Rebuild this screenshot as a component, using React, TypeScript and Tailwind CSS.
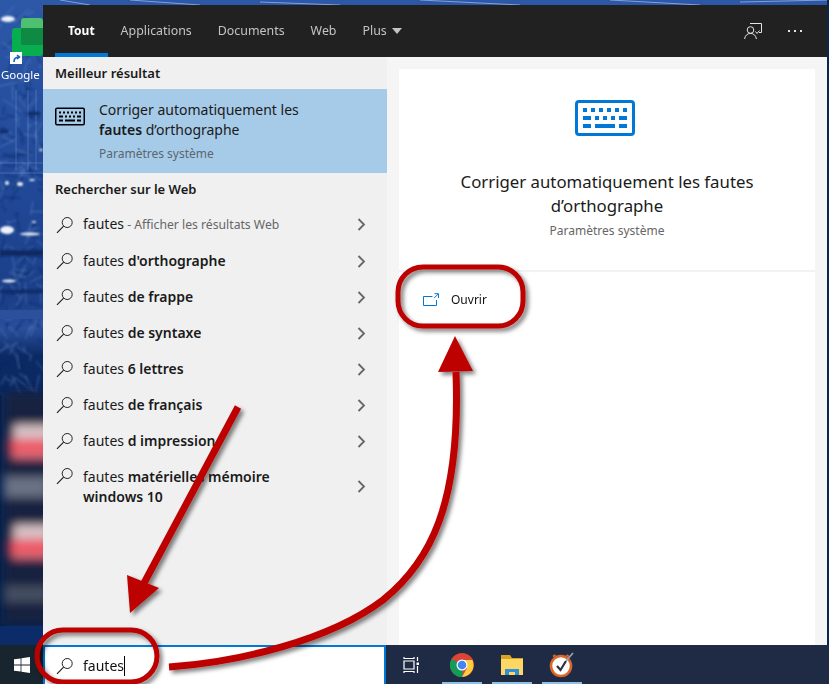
const font = "font-['Noto_Sans','Open_Sans',sans-serif]";

const Search = ({ className = "" }: { className?: string }) => (
  <svg className={className} width="18" height="18" viewBox="0 0 18 18" fill="none" stroke="#222" strokeWidth="1">
    <circle cx="11.200" cy="6.500" r="5" />
    <path d="M7.600 10.200 1 16.800" strokeWidth="1.200" />
  </svg>
);

const Chevron = () => (
  <svg width="9" height="13" viewBox="0 0 9 13" fill="none" stroke="#666" strokeWidth="1.800">
    <path d="M1.500 1l5.500 5.500-5.500 5.500" />
  </svg>
);

// same key layout at both sizes, the viewBox does the scaling
const Keyboard = ({ color, width, height, frame }: { color: string; width: number; height: number; frame: string }) => (
  <svg width={width} height={height} viewBox="0 0 60 36">
    <rect x="1.500" y="1.500" width="57" height="33" rx="2.500" fill="none" stroke={color} strokeWidth={frame} />
    <g fill={color}>
      {[8, 16, 24, 32, 40, 48].map((x) => (
        <rect key={x} x={x} y="8" width="4" height="4" />
      ))}
      <rect x="8" y="16" width="8" height="4" />
      {[20, 28, 36].map((x) => (
        <rect key={x} x={x} y="16" width="4" height="4" />
      ))}
      <rect x="44" y="16" width="8" height="4" />
      <rect x="8" y="24" width="8" height="4" />
      <rect x="20" y="24" width="20" height="4" />
      <rect x="44" y="24" width="8" height="4" />
    </g>
  </svg>
);

// fixed pseudo random strokes for the busy wallpaper texture
const noise = (n: number) => {
  const v = Math.sin(n * 127.1) * 43758.5453;
  return v - Math.floor(v);
};
const strokes = Array.from({ length: 220 }, (_, i) => {
  const x = noise(i) * 43;
  const y = 5 + noise(i + 200) * 385;
  const a = noise(i + 400) * Math.PI;
  const l = 4 + noise(i + 600) * 18;
  return {
    d: `M${x.toFixed(1)} ${y.toFixed(1)}l${(Math.cos(a) * l).toFixed(1)} ${(Math.sin(a) * l).toFixed(1)}`,
    light: i % 2 === 0,
  };
});

const Wallpaper = () => (
  <svg className="absolute inset-0" width="829" height="684" viewBox="0 0 829 684">
    <defs>
      <filter id="soft" x="-30%" y="-30%" width="160%" height="160%"><feGaussianBlur stdDeviation="5" /></filter>
      <filter id="tiny"><feGaussianBlur stdDeviation="0.800" /></filter>
      <linearGradient id="wall" x1="0" y1="0" x2="0" y2="1">
        <stop offset="0" stopColor="#2d58a8" />
        <stop offset="0.3" stopColor="#1f4795" />
        <stop offset="0.44" stopColor="#1b3f88" />
        <stop offset="0.48" stopColor="#2a4f9c" />
        <stop offset="0.52" stopColor="#0b2a64" />
        <stop offset="1" stopColor="#07204a" />
      </linearGradient>
    </defs>
    <rect width="829" height="684" fill="url(#wall)" />
    <g strokeWidth="1" filter="url(#tiny)">
      {strokes.map((s) => (
        <path key={s.d} d={s.d} stroke={s.light ? "#6f93d4" : "#0a2560"} opacity={s.light ? 0.5 : 0.7} />
      ))}
    </g>
    <g stroke="#a9c1ea" strokeWidth="1" opacity="0.7">
      <path d="M0 163H43M0 173H43M16 90V170M28 90V170M36 90V170" opacity="0.4" />
      <path d="M60 0 90 5M130 0 200 5M260 2 340 5M420 0 520 5M610 0 700 5M740 2 829 0" />
    </g>
    <path d="M827 0h2v684h-2z" fill="#0b2450" />
    <g fill="#eef3fb" filter="url(#tiny)">
      <ellipse cx="8" cy="19" rx="7" ry="3" />
      <ellipse cx="7" cy="183" rx="2" ry="2" />
      <ellipse cx="20" cy="184" rx="3" ry="2" />
      <ellipse cx="32" cy="180" rx="3" ry="1" />
      <ellipse cx="41" cy="150" rx="2" ry="1" />
      <ellipse cx="7" cy="230" rx="7" ry="4" />
      <ellipse cx="30" cy="234" rx="10" ry="1.500" />
      <ellipse cx="9" cy="281" rx="7" ry="1.500" />
      <ellipse cx="34" cy="222" rx="2" ry="1" />
    </g>
    <g fill="#0b2a64" filter="url(#tiny)">
      <rect x="0" y="130" width="8" height="3" />
      <rect x="28" y="112" width="12" height="3" />
      <rect x="0" y="250" width="43" height="6" />
      <rect x="0" y="290" width="43" height="3" />
    </g>
    <rect x="0" y="310" width="43" height="9" fill="#2d509d" />
    <rect x="0" y="395" width="2" height="250" fill="#07204a" />
    <g filter="url(#soft)">
      <rect x="4" y="392" width="50" height="232" fill="#13233f" />
      <rect x="14" y="425" width="36" height="16" fill="#d9c5c8" />
      <rect x="12" y="438" width="38" height="20" fill="#e2707e" />
      <rect x="10" y="445" width="40" height="4" fill="#ff1828" />
      <rect x="4" y="477" width="44" height="20" fill="#6b7285" />
      <rect x="14" y="525" width="36" height="16" fill="#d9c5c8" />
      <rect x="12" y="538" width="38" height="20" fill="#e2707e" />
      <rect x="10" y="546" width="40" height="4" fill="#ff1828" />
      <rect x="4" y="586" width="44" height="16" fill="#454d60" />
    </g>
    <rect x="0" y="626" width="43" height="19" fill="#0b2c69" />
  </svg>
);

const DesktopIcon = () => (
  <div className="absolute left-0 top-[17px] w-[43px] h-[70px]">
    <div className="absolute left-[21px] top-[1px] w-[22px] h-[30px] rounded-[3px] bg-[#4fc06f]" />
    <div className="absolute left-[12px] top-[11px] w-[31px] h-[28px] rounded-[3px] bg-[#08ad4f]" />
    <div className="absolute left-[21px] top-[11px] w-[22px] h-[17px] bg-[#0e8a45]" />
    <div className="absolute left-[10px] top-[35px] w-[12px] h-[12px] bg-white flex items-center justify-center">
      <svg width="9" height="9" viewBox="0 0 9 9" fill="none" stroke="#1f5fbf" strokeWidth="1.600">
        <path d="M2 8C2 5 3.500 3 7 3M5 1l2.500 2L5 5" />
      </svg>
    </div>
    <p className="absolute left-[1px] top-[50px] text-[11.500px] leading-[16px] text-white whitespace-nowrap">Google</p>
  </div>
);

const Suggestion = ({ text, bold, note, second, tall }: { text: string; bold?: string; note?: string; second?: string; tall?: boolean }) => (
  <div className={`flex pl-[13px] pr-[21px] ${second ? "h-[46px] pt-[8px]" : tall ? "h-[37px] items-center" : "h-[36px] items-center"}`}>
    <Search className="shrink-0" />
    <div className="flex-1 pl-[9px] text-[14px] leading-[20px] text-[#1a1a1a]">
      {text}
      {bold && <span className="font-semibold"> {bold}</span>}
      {note && <span className="text-[12.200px] text-[#666]"> - {note}</span>}
      {second && (
        <>
          <br />
          <span className="font-semibold">{second}</span>
        </>
      )}
    </div>
    <div className="flex items-center">
      <Chevron />
    </div>
  </div>
);

const Tab = ({ label, active }: { label: string; active?: boolean }) => (
  <div className={`relative flex items-center h-full px-[13px] ${active ? "text-[12px] font-bold text-white" : "text-[12.400px] text-[#c4c4c4]"}`}>
    {label}
    {active && <div className="absolute left-0 right-0 bottom-0 h-[4px] bg-[#0078d7]" />}
  </div>
);

const Chrome = () => (
  <svg width="24" height="24" viewBox="0 0 24 24">
    <circle cx="12" cy="12" r="12" fill="#db4437" />
    <path d="M12 12 1.600 18A12 12 0 0 0 12 24h1z" fill="#0f9d58" />
    <path d="M1.600 18A12 12 0 0 1 1.700 6L12 12z" fill="#0f9d58" />
    <path d="M12 7h10.400A12 12 0 0 1 12 24l5-9z" fill="#ffcd40" />
    <circle cx="12" cy="12" r="5.500" fill="#fff" />
    <circle cx="12" cy="12" r="4.300" fill="#4285f4" />
  </svg>
);

const Folder = () => (
  <svg width="22" height="20" viewBox="0 0 22 20">
    <path d="M0 0h9l2 3h11v17H0z" fill="#d9a520" />
    <rect x="0" y="4" width="22" height="16" fill="#fcd763" />
    <path d="M4 20v-6h14v6h-4v-3H8v3z" fill="#2f8fd8" />
  </svg>
);

const Clock = () => (
  <svg width="26" height="26" viewBox="0 0 26 26" fill="none">
    <circle cx="12" cy="14" r="10" fill="#fff" stroke="#d9682a" strokeWidth="2.600" />
    <path d="M8 14l3.500 4L17 9" stroke="#2c3340" strokeWidth="2.200" />
    <path d="M17 9 24 1" stroke="#9aa3b2" strokeWidth="1.600" />
    <path d="M4 4.500 6.500 3M20 4.500 17.500 3" stroke="#d9682a" strokeWidth="2" />
  </svg>
);

const Annotations = () => (
  <svg className="absolute inset-0 pointer-events-none" width="829" height="684" viewBox="0 0 829 684" fill="none">
    <defs>
      <filter id="shade" x="-20%" y="-20%" width="140%" height="140%">
        <feDropShadow dx="3" dy="3" stdDeviation="2" floodColor="#000" floodOpacity="0.5" />
      </filter>
    </defs>
    <g filter="url(#shade)">
      <rect x="398" y="267" width="125" height="59" rx="25" stroke="#bd0000" strokeWidth="5" />
      <rect x="37" y="630" width="120" height="52" rx="26" stroke="#bd0000" strokeWidth="5" />
      <path d="M238 407 143 585" stroke="#bd0000" strokeWidth="7" />
      <path d="M127 575 159 588 130 613z" fill="#bd0000" />
      <path d="M169 667C240 662 330 640 383 600 430 562 461 505 456 372" stroke="#bd0000" strokeWidth="7" />
      <path d="M455 336 438 372 473 371z" fill="#bd0000" />
    </g>
  </svg>
);

export default function App() {
  return (
    <div className={`${font} relative w-[829px] h-[684px] overflow-hidden bg-[#0b2450]`}>
      <Wallpaper />
      <DesktopIcon />
      <div className="relative flex flex-col h-full">
        <div className="flex-1 min-h-0 pl-[43px] pt-[5px] pr-[2px] flex">
          <div className="flex-1 flex flex-col">
            <div className="h-[52px] bg-[#212121] flex items-center pl-[12px] pr-[22px]">
              <Tab label="Tout" active />
              <Tab label="Applications" />
              <Tab label="Documents" />
              <Tab label="Web" />
              <Tab label="Plus" />
              <div className="-ml-[8px] w-0 h-0 border-x-[5px] border-x-transparent border-t-[6px] border-t-[#c4c4c4]" />
              <div className="ml-auto flex items-center gap-[26px]">
                <svg width="18" height="18" viewBox="0 0 18 18" fill="none" stroke="#e4e4e4" strokeWidth="1">
                  <circle cx="6.500" cy="8" r="3.300" />
                  <path d="M.6 17c.4-3.500 2.800-5.600 5.900-5.600s5.500 2.100 5.900 5.600M6 1.500h11.500v9H15M11.500 9.500l1.500 2 2.500-3" />
                </svg>
                <div className="flex gap-[4px] pr-[3px]">
                  <div className="w-[2px] h-[2px] bg-[#e4e4e4]" />
                  <div className="w-[2px] h-[2px] bg-[#e4e4e4]" />
                  <div className="w-[2px] h-[2px] bg-[#e4e4e4]" />
                </div>
              </div>
            </div>
            <div className="flex-1 min-h-0 flex">
              <div className="w-[344px] bg-[#f0f0f0]">
                <div className="h-[32px] pt-[1px] flex items-center px-[12px] text-[13px] font-semibold text-[#1a1a1a]">Meilleur résultat</div>
                <div className="h-[84px] bg-[#a6cbe8] flex">
                  <div className="w-[56px] pl-[12px] pt-[18px]">
                    <Keyboard color="#000" width={30} height={19} frame="3" />
                  </div>
                  <div className="pt-[11px] text-[14px] leading-[20px] text-[#1a1a1a]">
                    <p>Corriger automatiquement les</p>
                    <p><span className="font-semibold">fautes</span> d’orthographe</p>
                    <p className="mt-[4px] text-[12px] leading-[20px] text-[#5a6670]">Paramètres système</p>
                  </div>
                </div>
                <div className="h-[33px] flex items-center px-[12px] text-[13px] font-semibold text-[#1a1a1a]">Rechercher sur le Web</div>
                <Suggestion text="fautes" note="Afficher les résultats Web" tall />
                <Suggestion text="fautes" bold="d'orthographe" />
                <Suggestion text="fautes" bold="de frappe" />
                <Suggestion text="fautes" bold="de syntaxe" />
                <Suggestion text="fautes" bold="6 lettres" />
                <Suggestion text="fautes" bold="de français" />
                <Suggestion text="fautes" bold="d impression" />
                <Suggestion text="fautes" bold="matérielles mémoire" second="windows 10" />
              </div>
              <div className="flex-1 bg-[#f5f5f5] pl-[12px] pr-[12px] pt-[12px]">
                <div className="h-full bg-white flex flex-col">
                  <div className="h-[203px] border-b-2 border-[#f2f2f2] flex flex-col items-center pt-[31px]">
                    <div className="-ml-[4px]">
                      <Keyboard color="#0078d7" width={60} height={36} frame="3" />
                    </div>
                    <p className="mt-[34px] w-[340px] text-center text-[16.800px] leading-[24px] text-[#1a1a1a]">
                      Corriger automatiquement les fautes d’orthographe
                    </p>
                    <p className="mt-[3px] text-[12px] leading-[20px] text-[#666]">Paramètres système</p>
                  </div>
                  <div className="flex items-center h-[55px] pl-[24px]">
                    <svg width="16" height="13" viewBox="0 0 16 13" fill="none" stroke="#0078d7" strokeWidth="1">
                      <path d="M13.500 7v5.500H.5v-9h9M11.500 .7h4V5M15.200 1l-4 4" />
                    </svg>
                    <span className="ml-[12px] text-[12px] text-[#111]">Ouvrir</span>
                  </div>
                </div>
              </div>
            </div>
          </div>
        </div>
        <div className="h-[39px] bg-[#1f2b45] flex">
          <div className="w-[43px] bg-[#18242e] flex items-center justify-center">
            <svg width="16" height="16" viewBox="0 0 16 16" fill="#fff">
              <path d="M0 2.300 6.600 1.400V7.600H0zM7.400 1.300 16 0V7.600H7.400zM0 8.400H6.600V14.600L0 13.700zM7.400 8.400H16V16L7.400 14.700z" />
            </svg>
          </div>
          <div className="w-[343px] bg-white border-2 border-b-0 border-[#0078d7] flex items-center pl-[11px]">
            <Search />
            <span className="ml-[9px] text-[14px] text-[#111]">fautes</span>
            <div className="w-px h-[20px] bg-black" />
          </div>
          <div className="flex-1 flex items-center">
            <div className="w-[51px] flex justify-center">
              <svg className="ml-[-2px]" width="16" height="16" viewBox="0 0 16 16" fill="none" stroke="#fff" strokeWidth="1.200">
                <path d="M1 0v1.500h10V0M1 16v-1.500h10V16M1 4h10v8H1zM14.500 0v4M14.500 9v7" />
                <rect x="13.500" y="5.500" width="2.500" height="2.500" fill="#fff" stroke="none" />
              </svg>
            </div>
            <div className="relative w-[50px] h-full flex items-center justify-center">
              <Chrome />
              <div className="absolute left-[5px] right-[5px] bottom-0 h-[2px] bg-[#8fc1e8]" />
            </div>
            <div className="relative w-[50px] h-full flex items-center justify-center">
              <Folder />
              <div className="absolute left-[5px] right-[5px] bottom-0 h-[2px] bg-[#8fc1e8]" />
            </div>
            <div className="relative w-[50px] h-full flex items-center justify-center">
              <Clock />
              <div className="absolute left-[5px] right-[5px] bottom-0 h-[2px] bg-[#8fc1e8]" />
            </div>
          </div>
        </div>
      </div>
      <Annotations />
    </div>
  );
}
